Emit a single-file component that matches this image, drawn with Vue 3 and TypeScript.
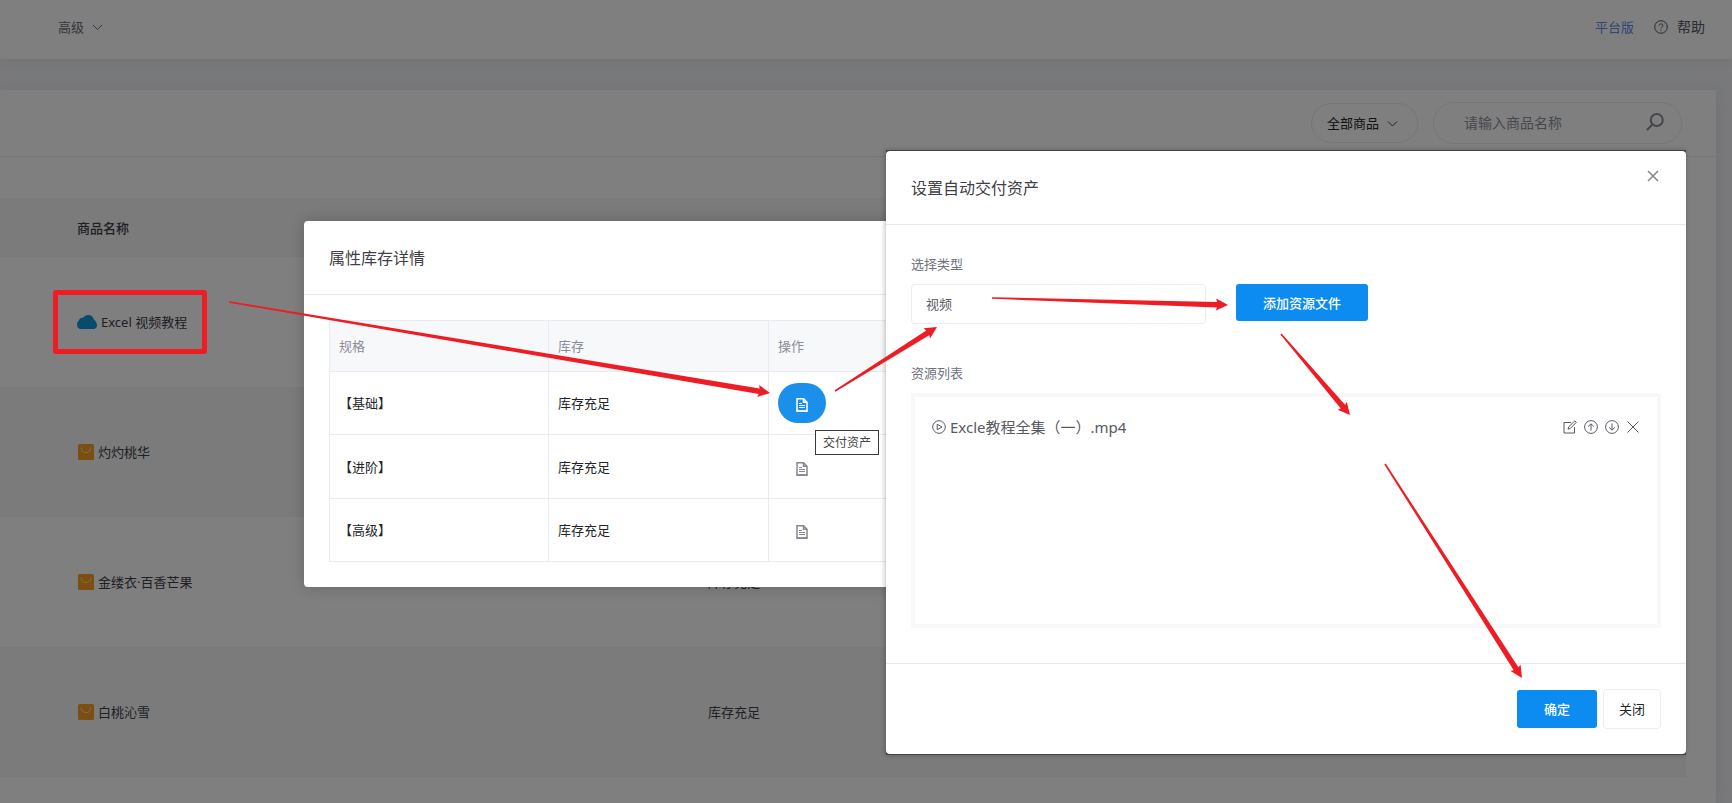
<script setup lang="ts">
import { ref } from 'vue'

interface Product {
  name: string
  kind: 'cloud' | 'bag'
  stock: string
}

interface Arrow {
  from: [number, number]
  to: [number, number]
}

const products: Product[] = [
  { name: 'Excel 视频教程', kind: 'cloud', stock: '' },
  { name: '灼灼桃华', kind: 'bag', stock: '' },
  { name: '金缕衣·百香芒果', kind: 'bag', stock: '库存充足' },
  { name: '白桃沁雪', kind: 'bag', stock: '库存充足' },
]

const specs = ['【基础】', '【进阶】', '【高级】']
const stockText = '库存充足'
const activeSpec = ref(0)
const scope = ref('all')
const assetType = ref('video')
const keyword = ref('')

const arrows: Arrow[] = [
  { from: [229, 302], to: [770, 393] },
  { from: [835, 391], to: [937, 327] },
  { from: [992, 298], to: [1228, 305] },
  { from: [1281, 334], to: [1350, 415] },
  { from: [1385, 464], to: [1522, 678] },
]

// Tapered shaft that widens towards a swept-back head.
function arrowPoints({ from, to }: Arrow): string {
  const dx = to[0] - from[0]
  const dy = to[1] - from[1]
  const len = Math.hypot(dx, dy)
  const at = (along: number, side: number): string => {
    const x = from[0] + (dx * along - dy * side) / len
    const y = from[1] + (dy * along + dx * side) / len
    return `${x.toFixed(1)},${y.toFixed(1)}`
  }
  return [
    at(0, -0.8),
    at(len - 11, -2.8),
    at(len - 12, -6),
    at(len, 0),
    at(len - 12, 6),
    at(len - 11, 2.8),
    at(0, 0.8),
  ].join(' ')
}
</script>

<template>
  <div class="page">
    <header class="topbar">
      <button type="button" class="level">
        高级
        <svg class="chevron" viewBox="0 0 11 8"><path d="M1 2 5.5 6.500 10 2" /></svg>
      </button>
      <nav class="links">
        <a href="#" class="edition">平台版</a>
        <a href="#" class="help">
          <svg viewBox="0 0 14 14" class="help-icon">
            <circle cx="7" cy="7" r="6.3" />
            <path d="M5.2 5.6c0-2.3 3.7-2.2 3.7 0 0 1.3-1.9 1.3-1.9 2.8M7 9.6v1.1" />
          </svg>
          帮助
        </a>
      </nav>
    </header>

    <main class="card">
      <div class="filters">
        <div class="scope">
          <select v-model="scope" aria-label="商品范围">
            <option value="all">全部商品</option>
          </select>
          <svg class="chevron" viewBox="0 0 11 8"><path d="M1 1.5 5.5 6 10 1.5" /></svg>
        </div>
        <div class="search">
          <input v-model="keyword" type="text" placeholder="请输入商品名称" aria-label="商品名称" />
          <svg viewBox="0 0 18 18"><circle cx="10.8" cy="7" r="6" /><path d="M6.6 11.2 1 17" /></svg>
        </div>
      </div>

      <table class="products">
        <colgroup>
          <col class="col-name" />
          <col />
        </colgroup>
        <thead>
          <tr>
            <th>商品名称</th>
            <th></th>
          </tr>
        </thead>
        <tbody>
          <tr v-for="p in products" :key="p.name">
            <td>
              <span class="product">
                <svg v-if="p.kind === 'cloud'" class="cloud" viewBox="0 0 20 14">
                  <path d="M4 14C1.500 14 0 12.200 0 9.800 0 7.700 1 6.300 2 5.600 2.200 3.700 4 2.400 6 2.900 7 1.100 9 0 11.200 0c3 0 5.200 2 5.500 4.600C18.800 5.800 20 8 20 10.300 20 12.600 18.600 14 16.500 14Z" />
                </svg>
                <svg v-else class="bag" viewBox="0 0 16 16">
                  <rect width="16" height="16" rx="1.500" />
                  <path d="M3 3.500C3.500 10.300 12.500 10.300 13 3.500" />
                </svg>
                {{ p.name }}
              </span>
            </td>
            <td>{{ p.stock }}</td>
          </tr>
        </tbody>
      </table>
    </main>

    <div class="mask"></div>

    <section class="dialog stock-dialog" role="dialog" aria-labelledby="stock-title">
      <h2 id="stock-title" class="dialog-title">属性库存详情</h2>
      <div class="stock-body">
        <table class="specs">
          <thead>
            <tr>
              <th>规格</th>
              <th>库存</th>
              <th>操作</th>
            </tr>
          </thead>
          <tbody>
            <tr v-for="(s, i) in specs" :key="s">
              <td>{{ s }}</td>
              <td>{{ stockText }}</td>
              <td>
                <button
                  type="button"
                  class="doc"
                  :class="{ active: i === activeSpec }"
                  aria-label="交付资产"
                  @click="activeSpec = i"
                >
                  <svg viewBox="0 0 12 14">
                    <path d="M1 .800H7.500L11 4.300V13H1Z" />
                    <path d="M7.500 .800V4.300H11" />
                    <path class="lines" d="M3 5.500H6M3 7.500H9M3 9.500H9" />
                    <path d="M.5 13.200H11.500" />
                  </svg>
                </button>
              </td>
            </tr>
          </tbody>
        </table>
      </div>
      <div class="tooltip" role="tooltip">交付资产</div>
    </section>

    <div class="asset-frame">
      <section class="dialog asset-dialog" role="dialog" aria-labelledby="asset-title">
        <h2 id="asset-title" class="dialog-title">设置自动交付资产</h2>
        <button type="button" class="close" aria-label="关闭窗口">
          <svg viewBox="0 0 12 12"><path d="M1 1 11 11M11 1 1 11" /></svg>
        </button>
        <div class="asset-body">
          <label for="asset-type" class="label">选择类型</label>
          <div class="type-row">
            <select id="asset-type" v-model="assetType" class="type">
              <option value="video">视频</option>
            </select>
            <button type="button" class="primary add">添加资源文件</button>
          </div>
          <h3 class="label list-label">资源列表</h3>
          <ul class="files">
            <li>
              <svg class="play" viewBox="0 0 14 14">
                <circle cx="7" cy="7" r="6.300" />
                <path d="M5.200 4.200 10 7 5.200 9.800Z" />
              </svg>
              <span class="file-name">Excle教程全集（一）.mp4</span>
              <span class="tools">
                <button type="button" aria-label="编辑">
                  <svg viewBox="0 0 14 14">
                    <path d="M8 2.500H1V13H11.500V7" />
                    <path d="M5 9.200 5.700 6.800 11.800 .900 13.300 2.300 7.300 8.500Z" />
                  </svg>
                </button>
                <button type="button" aria-label="上移">
                  <svg viewBox="0 0 14 14">
                    <circle cx="7" cy="7" r="6.400" />
                    <path d="M7 10.500V4M4.200 6.500 7 3.800 9.800 6.500" />
                  </svg>
                </button>
                <button type="button" aria-label="下移">
                  <svg viewBox="0 0 14 14">
                    <circle cx="7" cy="7" r="6.400" />
                    <path d="M7 3.500V10M4.200 7.500 7 10.200 9.800 7.500" />
                  </svg>
                </button>
                <button type="button" aria-label="删除">
                  <svg viewBox="0 0 14 14"><path d="M1.500 1.500 12.500 12.500M12.500 1.500 1.500 12.500" /></svg>
                </button>
              </span>
            </li>
          </ul>
        </div>
        <footer class="actions">
          <button type="button" class="primary ok">确定</button>
          <button type="button" class="cancel">关闭</button>
        </footer>
      </section>
    </div>

    <div class="marker"></div>
    <svg class="arrows">
      <polygon v-for="(a, i) in arrows" :key="i" :points="arrowPoints(a)" />
    </svg>
  </div>
</template>

<style>
body {
  margin: 0;
}
</style>

<style scoped>
.page,
.page * {
  box-sizing: border-box;
}

.page {
  position: relative;
  display: flex;
  flex-direction: column;
  min-height: 100vh;
  overflow: hidden;
  background: #f2f3f8;
  color: #3f4047;
  font-family: 'Noto Sans', 'Noto Sans CJK SC', sans-serif;
  font-size: 13px;
  line-height: 20px;
}

button,
input,
select {
  margin: 0;
  padding: 0;
  border: 0;
  background: none;
  color: inherit;
  font: inherit;
  appearance: none;
}

svg {
  display: block;
  fill: none;
  stroke: currentColor;
}

.topbar {
  display: flex;
  align-items: center;
  justify-content: space-between;
  height: 59px;
  padding: 0 27px 6px 58px;
  background: #fff;
  box-shadow: 0 1px 12px rgba(69, 65, 78, 0.1);
}

.level,
.links,
.help {
  display: flex;
  align-items: center;
}

.level {
  gap: 8px;
  color: #6c6d78;
}

.chevron {
  width: 11px;
  height: 8px;
}

.links {
  gap: 20px;
}

.edition {
  color: #5b8dee;
  text-decoration: none;
}

.help {
  gap: 9px;
  color: #55565f;
  font-size: 14px;
  text-decoration: none;
}

.help-icon {
  width: 14px;
  height: 14px;
}

.card {
  flex: 1;
  margin: 31px 16px 0 0;
  background: #fff;
  box-shadow: 0 1px 15px rgba(69, 65, 78, 0.1);
}

.filters {
  display: flex;
  align-items: center;
  justify-content: flex-end;
  gap: 15px;
  height: 67px;
  padding: 0 34px 0 0;
  border-bottom: 1px solid #ebedf2;
}

.scope {
  position: relative;
  width: 107px;
  height: 40px;
}

.scope select {
  width: 100%;
  height: 100%;
  padding: 0 15px;
  border: 1px solid #ebedf2;
  border-radius: 20px;
  color: #212529;
}

.scope .chevron {
  position: absolute;
  top: 17px;
  right: 20px;
  pointer-events: none;
}

.search {
  display: flex;
  align-items: center;
  width: 249px;
  height: 42px;
  padding: 0 17px 0 30px;
  border: 1px solid #ebedf2;
  border-radius: 21px;
  color: #8a8b9a;
}

.search input {
  flex: 1;
  min-width: 0;
  font-size: 14px;
  outline: 0;
}

.search input::placeholder {
  color: #8f909c;
  opacity: 1;
}

.search svg {
  width: 18px;
  height: 18px;
  margin-bottom: 2px;
  stroke-width: 2;
}

.products {
  width: calc(100% - 30px);
  margin-top: 41px;
  border-collapse: collapse;
  table-layout: fixed;
}

.col-name {
  width: 42%;
}

.products th {
  height: 59px;
  background: #f6f6f8;
  font-weight: 500;
  text-align: left;
}

.products th,
.products td {
  padding: 0;
}

.products th:first-child,
.products td:first-child {
  padding-left: 77px;
}

.products td {
  height: 130px;
}

.products tbody tr:nth-child(even) {
  background: #f7f7f9;
}

.product {
  display: flex;
  align-items: center;
  gap: 4px;
}

.cloud {
  width: 20px;
  height: 14px;
  fill: #1296db;
  stroke: none;
}

.bag {
  width: 16px;
  height: 16px;
  margin-left: 1px;
}

.bag rect {
  fill: #f69c22;
  stroke: none;
}

.bag path {
  stroke: #fbdcae;
}

.mask {
  position: absolute;
  inset: 0;
  background: rgba(0, 0, 0, 0.5);
}

.dialog {
  border-radius: 4px;
  background: #fff;
}

.dialog-title {
  height: 74px;
  margin: 0;
  padding: 25px;
  border-bottom: 1px solid #e6e9ee;
  font-size: 16px;
  font-weight: 400;
  line-height: 24px;
}

.stock-dialog {
  position: absolute;
  top: 221px;
  left: 304px;
  width: 800px;
  box-shadow: 0 0 15px rgba(0, 0, 0, 0.2);
}

.stock-body {
  padding: 25px;
}

.specs {
  width: 100%;
  border-collapse: collapse;
  table-layout: fixed;
  color: #212529;
}

.specs th,
.specs td {
  width: 220px;
  height: 63px;
  padding: 0 9px;
  border: 1px solid #e9eaf2;
  text-align: left;
}

.specs th:first-child,
.specs td:first-child {
  width: 219px;
}

.specs th:last-child,
.specs td:last-child {
  width: auto;
}

.specs th {
  height: 51px;
  background: #f7f8fa;
  color: #8b8c9a;
  font-weight: 400;
}

.specs tr:nth-child(2) td {
  height: 64px;
}

.doc {
  display: grid;
  place-items: center;
  width: 48px;
  height: 40px;
  border-radius: 20px;
  color: #868692;
}

.doc.active {
  background: #1b90ea;
  color: #fff;
}

.doc svg {
  width: 12px;
  height: 14px;
  margin-top: 4px;
  stroke-width: 1.5;
}

.doc .lines {
  stroke-width: 1;
}

.tooltip {
  position: absolute;
  top: 209px;
  left: 511px;
  padding: 1px 7px;
  border: 1px solid #3a3a3a;
  background: #fff;
  color: #444;
  font-size: 12px;
  line-height: 21px;
}

.asset-frame {
  position: absolute;
  top: 150px;
  left: 886px;
  width: 800px;
  padding: 1px 0;
  background: #434346;
  box-shadow: -1px 0 5px rgba(0, 0, 0, 0.25);
}

.asset-dialog {
  position: relative;
}

.close {
  position: absolute;
  top: 19px;
  right: 27px;
  color: #85868a;
}

.close svg {
  width: 12px;
  height: 12px;
  stroke-width: 1.5;
}

.asset-body {
  padding: 29px 25px 35px;
}

.label {
  display: block;
  margin: 0;
  color: #6f727d;
  font-size: 13px;
  font-weight: 400;
}

.type-row {
  display: flex;
  align-items: flex-start;
  gap: 30px;
  margin-top: 10px;
}

.type {
  width: 295px;
  height: 40px;
  padding: 0 14px;
  border: 1px solid #ebedf2;
  border-radius: 4px;
  color: #575962;
}

.primary {
  border-radius: 3px;
  background: #0c8bf1;
  color: #fff;
  font-weight: 500;
}

.add {
  width: 132px;
  height: 37px;
}

.list-label {
  margin-top: 39px;
}

.files {
  min-height: 235px;
  margin: 10px 0 0;
  padding: 17px;
  border: 4px solid #f7f8fa;
  color: #575962;
  list-style: none;
}

.files li {
  display: flex;
  align-items: center;
  gap: 4px;
  height: 26px;
  font-size: 15px;
}

.play {
  width: 14px;
  height: 14px;
}

.tools {
  display: flex;
  gap: 7px;
  margin-left: auto;
}

.tools svg {
  width: 14px;
  height: 14px;
}

.actions {
  display: flex;
  align-items: center;
  justify-content: flex-end;
  gap: 6px;
  padding: 25px;
  border-top: 1px solid #e9e9ec;
}

.ok {
  width: 80px;
  height: 38px;
}

.cancel {
  width: 58px;
  height: 40px;
  border: 1px solid #ebedf2;
  border-radius: 4px;
  color: #212529;
}

.marker {
  position: absolute;
  top: 290px;
  left: 53px;
  width: 154px;
  height: 64px;
  border: 5px solid #f01c24;
  border-radius: 3px;
}

.arrows {
  position: absolute;
  inset: 0;
  width: 100%;
  height: 100%;
  fill: #ee1c24;
  stroke: none;
  pointer-events: none;
}
</style>
